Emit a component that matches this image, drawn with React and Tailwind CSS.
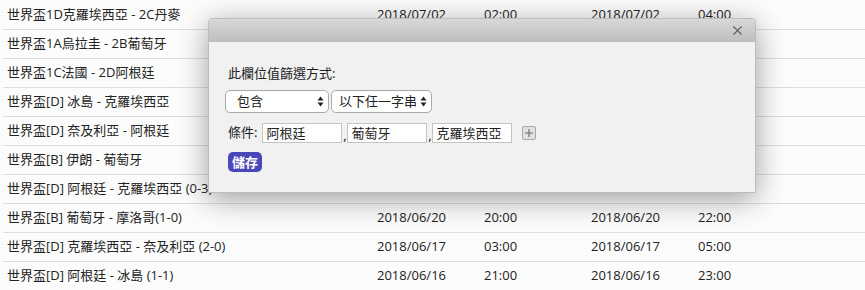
import { X } from 'lucide-react'

const rows = [
  ['世界盃1D克羅埃西亞 - 2C丹麥', '2018/07/02', '02:00', '2018/07/02', '04:00'],
  ['世界盃1A烏拉圭 - 2B葡萄牙', '2018/07/01', '02:00', '2018/07/01', '04:00'],
  ['世界盃1C法國 - 2D阿根廷', '2018/06/30', '22:00', '2018/07/01', '00:00'],
  ['世界盃[D] 冰島 - 克羅埃西亞', '2018/06/27', '02:00', '2018/06/27', '04:00'],
  ['世界盃[D] 奈及利亞 - 阿根廷', '2018/06/27', '02:00', '2018/06/27', '04:00'],
  ['世界盃[B] 伊朗 - 葡萄牙', '2018/06/26', '02:00', '2018/06/26', '04:00'],
  ['世界盃[D] 阿根廷 - 克羅埃西亞 (0-3)', '2018/06/22', '02:00', '2018/06/22', '04:00'],
  ['世界盃[B] 葡萄牙 - 摩洛哥(1-0)', '2018/06/20', '20:00', '2018/06/20', '22:00'],
  ['世界盃[D] 克羅埃西亞 - 奈及利亞 (2-0)', '2018/06/17', '03:00', '2018/06/17', '05:00'],
  ['世界盃[D] 阿根廷 - 冰島 (1-1)', '2018/06/16', '21:00', '2018/06/16', '23:00'],
]

function Arrows() {
  return (
    <svg width="7" height="11" viewBox="0 0 7 11" className="shrink-0">
      <path d="M3.5 0.5 L6.5 4.5 L0.5 4.5 Z" fill="#222" />
      <path d="M3.5 10.5 L6.5 6.5 L0.5 6.5 Z" fill="#222" />
    </svg>
  )
}

function Select({ label, width, pad }) {
  return (
    <div
      className={`flex h-[23px] items-center justify-between rounded-[5px] border border-[#a9a9a9] bg-white pr-[4px] ${width} ${pad}`}
    >
      <span className="whitespace-nowrap">{label}</span>
      <Arrows />
    </div>
  )
}

function Field({ value }) {
  return (
    <div className="flex h-[20px] w-[80px] shrink-0 items-center border border-[#c4c4c4] bg-white pl-[3px] leading-none">
      {value}
    </div>
  )
}

function Comma() {
  return <span className="flex h-[20px] w-[5px] shrink-0 items-end justify-center leading-[16px]">,</span>
}

export default function App() {
  return (
    <div
      className="relative h-[290px] w-[865px] overflow-hidden bg-[#fcfcfc] text-[13px] text-[#222]"
      style={{ fontFamily: '"Open Sans", "Noto Sans CJK TC", sans-serif' }}
    >
      {/* Table */}
      <div className="ml-[3px] pt-[1px]">
        {rows.map((r, i) => (
          <div
            key={i}
            className="grid h-[29px] grid-cols-[370px_107px_107px_107px_1fr] items-center border-b border-[#dedede] pl-[4px]"
          >
            {r.map((c, j) => (
              <span key={j} className="whitespace-nowrap">
                {c}
              </span>
            ))}
          </div>
        ))}
      </div>

      {/* Filter dialog */}
      <div
        className="absolute left-[208px] top-[18px] flex h-[175px] w-[548px] flex-col overflow-hidden rounded-t-[4px] border border-[#bdbdbd] bg-[#f1f1f1] shadow-[0_6px_30px_rgba(0,0,0,0.38)]"
        style={{ fontFamily: '"Noto Sans", "Noto Sans CJK TC", sans-serif' }}
      >
        <div className="flex h-[23px] shrink-0 items-center justify-end bg-gradient-to-b from-[#d8d8d8] to-[#bebebe] pr-[10px]">
          <X size={15} strokeWidth={1.7} className="text-[#5f5f5f]" />
        </div>
        <div className="flex flex-col pl-[19px] pt-[22px]">
          <div className="h-[18px] leading-[18px]">此欄位值篩選方式:</div>
          <div className="mt-[8px] ml-[-3px] flex gap-[2px]">
            <Select label="包含" width="w-[104px]" pad="pl-[11px]" />
            <Select label="以下任一字串" width="w-[101px]" pad="pl-[7px]" />
          </div>
          <div className="mt-[10px] flex h-[20px] items-center">
            <span className="mr-[5px] whitespace-nowrap">條件:</span>
            <Field value="阿根廷" />
            <Comma />
            <Field value="葡萄牙" />
            <Comma />
            <Field value="克羅埃西亞" />
            <div className="ml-[10px] flex h-[14px] w-[14px] items-center justify-center rounded-[2px] border border-[#a8a8a8] bg-[#e2e2e2]">
              <svg width="10" height="10" viewBox="0 0 10 10">
                <path d="M5 1 V9 M1 5 H9" stroke="#8a8a8a" strokeWidth="1.6" />
              </svg>
            </div>
          </div>
          <div className="mt-[9px]">
            <button className="h-[20px] rounded-[5px] bg-[#4a47b9] px-[4px] text-[13px] font-bold leading-[20px] text-white">
              儲存
            </button>
          </div>
        </div>
      </div>
    </div>
  )
}
